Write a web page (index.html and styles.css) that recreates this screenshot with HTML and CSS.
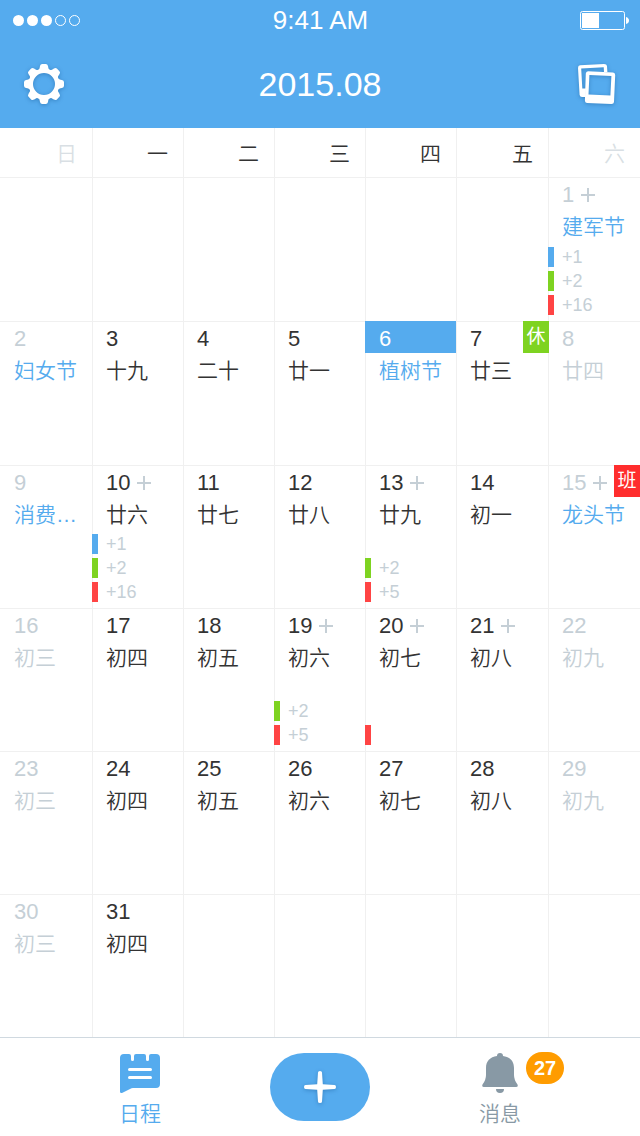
FILE: index.html
```html
<!DOCTYPE html>
<html lang="zh-CN">
<head>
<meta charset="utf-8">
<meta name="viewport" content="width=device-width, initial-scale=1">
<title>2015.08</title>
<link rel="stylesheet" href="styles.css">
</head>
<body>
<div class="app">
  <header class="top">
    <div class="status">
      <svg class="signal" viewBox="0 0 68 12" width="68" height="12" aria-hidden="true">
        <g fill="#fff"><circle cx="6.500" cy="6.500" r="5.500"/><circle cx="20.500" cy="6.500" r="5.500"/><circle cx="34.500" cy="6.500" r="5.500"/></g>
        <g fill="none" stroke="#fff"><circle cx="48.500" cy="6.500" r="5"/><circle cx="62.500" cy="6.500" r="5"/></g>
      </svg>
      <span class="clock">9:41 AM</span>
      <svg class="battery" viewBox="0 0 49 19" width="49" height="19" aria-hidden="true">
        <rect x=".5" y=".5" width="44" height="18" rx="2" fill="none" stroke="#fff"/>
        <rect x="2" y="2" width="17" height="15" fill="#fff"/>
        <path d="M46 6Q49 7 49 9.500T46 13Z" fill="#fff"/>
      </svg>
    </div>
    <div class="navbar">
      <button class="icon-btn" type="button" aria-label="设置">
        <svg viewBox="-20 -20 40 40" width="40" height="40">
          <defs><path id="tooth" d="M-6.500-13C-4.500-14.500-4.400-16-4-18Q-3.500-20-1.800-20H1.800Q3.500-20 4-18C4.400-16 4.500-14.500 6.500-13Z"/></defs>
          <g fill="#fff">
            <use href="#tooth"/><use href="#tooth" transform="rotate(45)"/><use href="#tooth" transform="rotate(90)"/><use href="#tooth" transform="rotate(135)"/>
            <use href="#tooth" transform="rotate(180)"/><use href="#tooth" transform="rotate(225)"/><use href="#tooth" transform="rotate(270)"/><use href="#tooth" transform="rotate(315)"/>
          </g>
          <circle r="13.200" fill="none" stroke="#fff" stroke-width="4.400"/>
        </svg>
      </button>
      <h1 class="title">2015.08</h1>
      <button class="icon-btn" type="button" aria-label="相册">
        <svg viewBox="0 0 38 40" width="38" height="40" fill="#fff" fill-rule="evenodd">
          <path d="M2 1.300L26 0Q28.800 0 29 2L29.400 8H26L25.700 3.200L3.200 4.500L4.300 24.500H8L7.500 33H4Q2 33 1.600 31L0 4Q0 1.600 2 1.300Z"/>
          <path d="M10 7.200L35 8.500Q37.200 8.800 37.200 11L36 38Q35.800 40 33.500 40L9 39Q6.800 38.800 6.900 36.500L7.800 9.500Q8 7.400 10 7.200ZM11.400 11L10.500 30.500L32.400 31.500L33.400 12.100Z"/>
        </svg>
      </button>
    </div>
  </header>

  <main class="main">
    <table class="calendar">
      <thead>
        <tr><th class="off">日</th><th>一</th><th>二</th><th>三</th><th>四</th><th>五</th><th class="off">六</th></tr>
      </thead>
      <tbody>
        <tr>
          <td></td><td></td><td></td><td></td><td></td><td></td>
          <td class="off"><div class="num">1<i class="more"></i></div><div class="lunar fest">建军节</div><ul class="events"><li class="blue">+1</li><li class="green">+2</li><li class="red">+16</li></ul></td>
        </tr>
        <tr>
          <td class="off"><div class="num">2</div><div class="lunar fest">妇女节</div></td>
          <td><div class="num">3</div><div class="lunar">十九</div></td>
          <td><div class="num">4</div><div class="lunar">二十</div></td>
          <td><div class="num">5</div><div class="lunar">廿一</div></td>
          <td class="today"><div class="num">6</div><div class="lunar fest">植树节</div></td>
          <td class="marked"><div class="num">7</div><div class="lunar">廿三</div><span class="mark rest">休</span></td>
          <td class="off"><div class="num">8</div><div class="lunar">廿四</div></td>
        </tr>
        <tr>
          <td class="off"><div class="num">9</div><div class="lunar fest">消费…</div></td>
          <td><div class="num">10<i class="more"></i></div><div class="lunar">廿六</div><ul class="events"><li class="blue">+1</li><li class="green">+2</li><li class="red">+16</li></ul></td>
          <td><div class="num">11</div><div class="lunar">廿七</div></td>
          <td><div class="num">12</div><div class="lunar">廿八</div></td>
          <td><div class="num">13<i class="more"></i></div><div class="lunar">廿九</div><ul class="events"><li class="green">+2</li><li class="red">+5</li></ul></td>
          <td><div class="num">14</div><div class="lunar">初一</div></td>
          <td class="off marked"><div class="num">15<i class="more"></i></div><div class="lunar fest">龙头节</div><span class="mark work">班</span></td>
        </tr>
        <tr>
          <td class="off"><div class="num">16</div><div class="lunar">初三</div></td>
          <td><div class="num">17</div><div class="lunar">初四</div></td>
          <td><div class="num">18</div><div class="lunar">初五</div></td>
          <td><div class="num">19<i class="more"></i></div><div class="lunar">初六</div><ul class="events"><li class="green">+2</li><li class="red">+5</li></ul></td>
          <td><div class="num">20<i class="more"></i></div><div class="lunar">初七</div><ul class="events"><li class="red"></li></ul></td>
          <td><div class="num">21<i class="more"></i></div><div class="lunar">初八</div></td>
          <td class="off"><div class="num">22</div><div class="lunar">初九</div></td>
        </tr>
        <tr>
          <td class="off"><div class="num">23</div><div class="lunar">初三</div></td>
          <td><div class="num">24</div><div class="lunar">初四</div></td>
          <td><div class="num">25</div><div class="lunar">初五</div></td>
          <td><div class="num">26</div><div class="lunar">初六</div></td>
          <td><div class="num">27</div><div class="lunar">初七</div></td>
          <td><div class="num">28</div><div class="lunar">初八</div></td>
          <td class="off"><div class="num">29</div><div class="lunar">初九</div></td>
        </tr>
        <tr>
          <td class="off"><div class="num">30</div><div class="lunar">初三</div></td>
          <td><div class="num">31</div><div class="lunar">初四</div></td>
          <td></td><td></td><td></td><td></td><td></td>
        </tr>
      </tbody>
    </table>
  </main>

  <nav class="tabs">
    <a class="tab active" href="#schedule">
      <svg viewBox="0 0 40 40" width="40" height="40" aria-hidden="true">
        <path fill="currentColor" d="M4 1H9Q11 1 11 3V6.500A1.500 1.500 0 0 0 14 6.500V3Q14 1 16 1H24Q26 1 26 3V6.500A1.500 1.500 0 0 0 29 6.500V3Q29 1 31 1H36Q40 1 40 5V31Q40 35 36 35H13Q11.500 35 10 36L2 40Q0 40.500 0 38.500V5Q0 1 4 1Z"/>
        <path stroke="#fff" stroke-width="3" stroke-linecap="round" d="M9.500 16.500H30.500M9.500 24.500H30.500"/>
      </svg>
      <span>日程</span>
    </a>
    <button class="create" type="button" aria-label="新建">
      <svg viewBox="-16 -16 32 32" width="32" height="32">
        <path fill="#fff" d="M-2-14.500Q-2-16 0-16T2-14.500L2.800-2.800L14.500-2Q16-2 16 0T14.500 2L2.800 2.800L2 14.500Q2 16 0 16T-2 14.500L-2.800 2.800L-14.500 2Q-16 2-16 0T-14.500-2L-2.800-2.800Z"/>
      </svg>
    </button>
    <a class="tab" href="#messages">
      <svg viewBox="0 0 36 40" width="36" height="40" aria-hidden="true" fill="currentColor">
        <path d="M15 3Q15 0 18 0T21 3C28 4 32 8 32 15V22Q32 27 35.500 31.500Q36.500 34 34 34H2Q-.5 34 .5 31.500Q4 27 4 22V15C4 8 8 4 15 3Z"/>
        <path d="M14 36H22Q22 40 18 40T14 36Z"/>
      </svg>
      <span>消息</span>
      <b class="count">27</b>
    </a>
  </nav>
</div>
</body>
</html>
```
FILE: styles.css
```css
:root {
  --blue: #55abee;
  --green: #7ed321;
  --red: #ff4444;
  --ink: #333;
  --muted: #c5cfd6;
  --line: #f0f0f0;
  --slate: #8899a5;
}

* {
  box-sizing: border-box;
}

body {
  margin: 0;
  background: #fff;
  color: var(--ink);
  font-family: "Liberation Sans", "Noto Sans CJK SC", sans-serif;
}

button {
  padding: 0;
  border: 0;
  background: none;
}

svg {
  display: block;
  overflow: visible;
}

.app {
  display: flex;
  flex-direction: column;
  min-height: 100vh;
}

.top {
  background: var(--blue);
  color: #fff;
}

.status,
.navbar {
  display: grid;
  grid-template-columns: 1fr auto 1fr;
  align-items: center;
}

.status {
  height: 40px;
  padding: 0 11px 0 12px;
}

.clock {
  font-size: 26px;
}

.status > :last-child,
.navbar > :last-child {
  justify-self: end;
}

.navbar {
  height: 88px;
  padding: 0 24px;
}

.icon-btn {
  justify-self: start;
  filter: drop-shadow(0 1px 2px rgba(0, 60, 120, 0.35));
}

.title {
  margin: 0;
  font-size: 34px;
  font-weight: 400;
}

.main {
  display: grid;
  flex: 1;
}

.calendar {
  display: grid;
  grid-template-columns: 92fr 91fr 91fr 91fr 91fr 92fr 92fr;
  grid-template-rows: 49px 144fr 144fr 143fr 143fr 143fr 143fr;
}

.calendar thead,
.calendar tbody,
.calendar tr {
  display: contents;
}

.calendar th {
  padding: 2px 15px 0;
  box-shadow: inset 1px 0 var(--line);
  font-size: 21px;
  font-weight: 350;
  line-height: 47px;
  text-align: right;
}

.calendar td {
  display: flex;
  flex-direction: column;
  position: relative;
  min-width: 0;
  padding: 0 0 6px;
  box-shadow: inset 1px 1px var(--line);
}

.calendar th:first-child {
  box-shadow: none;
}

.calendar td:first-child {
  box-shadow: inset 0 1px var(--line);
}

.off {
  color: var(--muted);
}

.calendar th.off {
  color: #d9dfe4;
}

.num {
  display: flex;
  align-items: center;
  gap: 7px;
  height: 32px;
  padding: 3px 0 0 14px;
  font-size: 22px;
}

.more {
  width: 14px;
  height: 14px;
  background:
    linear-gradient(var(--muted), var(--muted)) center / 14px 2px no-repeat,
    linear-gradient(var(--muted), var(--muted)) center / 2px 14px no-repeat;
}

.lunar {
  padding-left: 14px;
  font-size: 21px;
  font-weight: 350;
  line-height: 36px;
  white-space: nowrap;
}

.fest {
  color: var(--blue);
}

.today,
.marked {
  z-index: 1;
}

.today .num {
  margin-right: -1px;
  background: var(--blue);
  color: #fff;
}

.mark {
  position: absolute;
  top: 0;
  right: -1px;
  width: 26px;
  color: #fff;
  font-size: 19px;
  line-height: 32px;
  text-align: center;
}

td:last-child .mark {
  right: 0;
}

.rest {
  background: var(--green);
}

.work {
  background: #ff2d2d;
}

.events {
  display: grid;
  gap: 4px;
  margin: auto 0 0;
  padding: 0;
  list-style: none;
  color: var(--muted);
  font-size: 18px;
  line-height: 20px;
}

.events li {
  height: 20px;
  padding-left: 8px;
  border-left: 6px solid;
}

.events li.blue {
  border-color: var(--blue);
}

.events li.green {
  border-color: var(--green);
}

.events li.red {
  border-color: var(--red);
}

.tabs {
  display: grid;
  grid-template-columns: repeat(3, 180px);
  justify-content: center;
  justify-items: center;
  align-items: start;
  height: 99px;
  padding-top: 15px;
  border-top: 1px solid #d0d9e0;
}

.tab {
  display: grid;
  justify-items: center;
  position: relative;
  color: var(--slate);
  font-size: 21px;
  font-weight: 350;
  line-height: 42px;
  text-decoration: none;
}

.tab.active {
  color: var(--blue);
}

.create {
  display: grid;
  place-items: center;
  width: 100px;
  height: 68px;
  border-radius: 34px;
  background: var(--blue);
}

.create svg {
  filter: drop-shadow(0 1px 2px rgba(0, 60, 120, 0.35));
}

.count {
  position: absolute;
  top: -1px;
  left: 47px;
  width: 38px;
  border-radius: 16px;
  background: #ff9c00;
  color: #fff;
  font-size: 20px;
  font-weight: 700;
  line-height: 32px;
  text-align: center;
}
```
